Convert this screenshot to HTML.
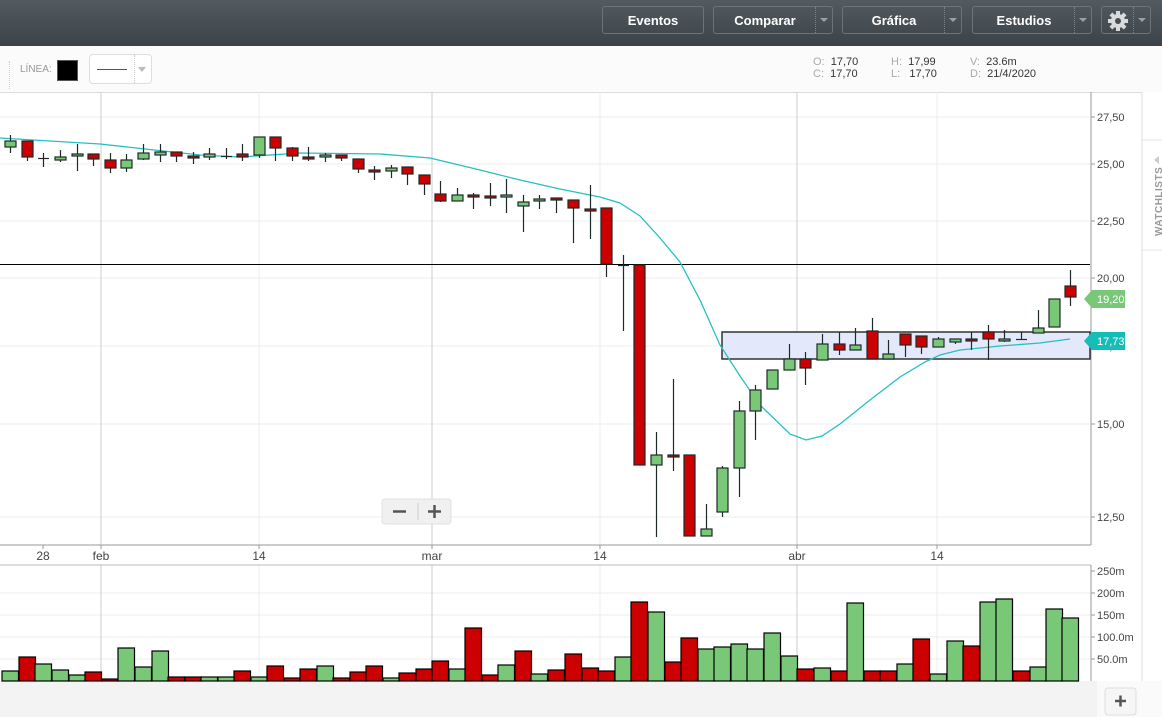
<!DOCTYPE html>
<html><head><meta charset="utf-8"><style>
body{margin:0;width:1162px;height:717px;overflow:hidden;background:#fff;font-family:"Liberation Sans",Arial,sans-serif;position:relative}
.top{position:absolute;left:0;top:0;width:1162px;height:46px;background:linear-gradient(#525b60,#3b4348)}
.btn{position:absolute;top:6px;height:28px;border:1px solid #6b7479;border-radius:3px;color:#fff;font-weight:bold;font-size:13px;line-height:28px;text-align:center;box-sizing:border-box}
.dd{position:absolute;right:0;top:0;width:16px;height:26px;border-left:1px dotted #7a8287}
.dd:after{content:"";position:absolute;left:4px;top:11px;border:4px solid transparent;border-top:4px solid #9aa1a5}
.tb{position:absolute;left:0;top:46px;width:1162px;height:46px;background:#fbfbfb}
.info{position:absolute;font-size:11px;color:#333;line-height:12px}
.info span{color:#aaa}
</style></head><body>
<div class="top">
<div class="btn" style="left:602px;width:102px">Eventos</div>
<div class="btn" style="left:713px;width:120px;padding-right:16px">Comparar<div class="dd"></div></div>
<div class="btn" style="left:842px;width:120px;padding-right:16px">Gráfica<div class="dd"></div></div>
<div class="btn" style="left:972px;width:120px;padding-right:16px">Estudios<div class="dd"></div></div>
<div class="btn" style="left:1101px;width:50px;padding-right:16px"><svg width="22" height="22" viewBox="0 0 22 22" style="margin-top:3px"><g fill="#d8dadb"><circle cx="11" cy="11" r="7"/><rect x="9" y="1" width="4" height="20"/><rect x="1" y="9" width="20" height="4"/><rect x="9" y="1" width="4" height="20" transform="rotate(45 11 11)"/><rect x="9" y="1" width="4" height="20" transform="rotate(-45 11 11)"/></g><circle cx="11" cy="11" r="3" fill="#454d52"/></svg><div class="dd"></div></div>
</div>
<div class="tb">
<div style="position:absolute;left:9px;top:15px;height:28px;border-left:1px dotted #ccc"></div>
<div style="position:absolute;left:20px;top:18px;font-size:10px;color:#999">LÍNEA:</div>
<div style="position:absolute;left:57px;top:14px;width:19px;height:19px;background:#000;border:1px solid #555"></div>
<div style="position:absolute;left:89px;top:8px;width:61px;height:28px;border:1px solid #ddd;border-radius:4px;background:#fff"><div style="position:absolute;left:7px;top:14px;width:30px;border-top:1px solid #555"></div><div style="position:absolute;left:44px;top:0;height:28px;border-left:1px dotted #ccc"></div><div style="position:absolute;left:48px;top:12px;border:4px solid transparent;border-top:5px solid #bbb"></div></div>
<div class="info" style="left:813px;top:10px"><span>O:</span>&nbsp; 17,70<br><span>C:</span>&nbsp; 17,70</div>
<div class="info" style="left:891px;top:10px"><span>H:</span>&nbsp; 17,99<br><span>L:</span>&nbsp;&nbsp; 17,70</div>
<div class="info" style="left:970px;top:10px"><span>V:</span>&nbsp; 23.6m<br><span>D:</span>&nbsp; 21/4/2020</div>
</div>
<svg width="1162" height="625" viewBox="0 92 1162 625" style="position:absolute;left:0;top:92px" font-family="Liberation Sans, Arial, sans-serif" font-size="11">
<rect x="0" y="681" width="1162" height="36" fill="#f3f3f3"/>
<rect x="1097" y="681" width="65" height="36" fill="#fafafa"/>
<rect x="1105" y="688" width="31" height="27" rx="3" fill="#f6f6f6" stroke="#ddd"/>
<path d="M1115 701h11M1120.5 695.5v11" stroke="#555" stroke-width="2.5"/>
<line x1="1142" y1="92" x2="1142" y2="681" stroke="#ddd"/>
<line x1="1142" y1="140" x2="1162" y2="140" stroke="#e4e4e4"/>
<line x1="1142" y1="250" x2="1162" y2="250" stroke="#e4e4e4"/>
<text transform="translate(1162,236) rotate(-90)" font-size="10" fill="#999" font-weight="bold" letter-spacing="0.5">WATCHLISTS</text>
<path d="M1154 160l5-4v8z" fill="#ccc"/>
<line x1="0" y1="92.5" x2="1142" y2="92.5" stroke="#ddd"/>
<g stroke="#ececec"><line x1="0" y1="117" x2="1090" y2="117"/><line x1="0" y1="164" x2="1090" y2="164"/><line x1="0" y1="221" x2="1090" y2="221"/><line x1="0" y1="278" x2="1090" y2="278"/><line x1="0" y1="346" x2="1090" y2="346"/><line x1="0" y1="424" x2="1090" y2="424"/><line x1="0" y1="517" x2="1090" y2="517"/>
<line x1="259" y1="92" x2="259" y2="545"/><line x1="600" y1="92" x2="600" y2="545"/><line x1="937" y1="92" x2="937" y2="545"/>
<line x1="259" y1="565" x2="259" y2="681"/><line x1="600" y1="565" x2="600" y2="681"/><line x1="937" y1="565" x2="937" y2="681"/>
<line x1="0" y1="593" x2="1090" y2="593"/><line x1="0" y1="615" x2="1090" y2="615"/><line x1="0" y1="637" x2="1090" y2="637"/><line x1="0" y1="659" x2="1090" y2="659"/></g>
<g stroke="#ccc"><line x1="101" y1="92" x2="101" y2="545"/><line x1="432" y1="92" x2="432" y2="545"/><line x1="797" y1="92" x2="797" y2="545"/>
<line x1="101" y1="565" x2="101" y2="681"/><line x1="432" y1="565" x2="432" y2="681"/><line x1="797" y1="565" x2="797" y2="681"/></g>
<line x1="1091" y1="92" x2="1091" y2="545" stroke="#999"/>
<line x1="0" y1="545" x2="1091" y2="545" stroke="#999"/>
<line x1="0" y1="565" x2="1091" y2="565" stroke="#bbb"/>
<line x1="1091" y1="565" x2="1091" y2="681" stroke="#999"/>
<g stroke="#999"><line x1="1091" y1="117" x2="1095" y2="117"/><line x1="1091" y1="164" x2="1095" y2="164"/><line x1="1091" y1="221" x2="1095" y2="221"/><line x1="1091" y1="278" x2="1095" y2="278"/><line x1="1091" y1="346" x2="1095" y2="346"/><line x1="1091" y1="424" x2="1095" y2="424"/><line x1="1091" y1="517" x2="1095" y2="517"/>
<line x1="1091" y1="571" x2="1095" y2="571"/><line x1="1091" y1="593" x2="1095" y2="593"/><line x1="1091" y1="615" x2="1095" y2="615"/><line x1="1091" y1="637" x2="1095" y2="637"/><line x1="1091" y1="659" x2="1095" y2="659"/>
<line x1="43" y1="545" x2="43" y2="549"/><line x1="101" y1="545" x2="101" y2="549"/><line x1="259" y1="545" x2="259" y2="549"/><line x1="432" y1="545" x2="432" y2="549"/><line x1="600" y1="545" x2="600" y2="549"/><line x1="797" y1="545" x2="797" y2="549"/><line x1="937" y1="545" x2="937" y2="549"/></g>
<g fill="#444" font-size="11"><text x="1097" y="121">27,50</text><text x="1097" y="168">25,00</text><text x="1097" y="225">22,50</text><text x="1097" y="282">20,00</text><text x="1097" y="350">17,50</text><text x="1097" y="428">15,00</text><text x="1097" y="521">12,50</text>
<text x="1097" y="575">250m</text><text x="1097" y="597">200m</text><text x="1097" y="619">150m</text><text x="1097" y="641">100.0m</text><text x="1097" y="663">50.0m</text></g>
<g fill="#444" font-size="12" text-anchor="middle"><text x="43" y="560">28</text><text x="101" y="560">feb</text><text x="259" y="560">14</text><text x="432" y="560">mar</text><text x="600" y="560">14</text><text x="797" y="560">abr</text><text x="937" y="560">14</text></g>
<rect x="722" y="332" width="368" height="27" fill="#e3e9fb" stroke="#333" stroke-width="1.5"/>
<line x1="0" y1="264.5" x2="1090" y2="264.5" stroke="#000"/>
<polyline fill="none" stroke="#26c0c0" stroke-width="1.3" points="0,138 100,144 200,155 240,157 300,153 380,154 430,158 480,170 520,180 560,189 600,197 620,203 640,216 660,238 680,262 700,300 720,345 740,376 760,405 790,434 806,440 822,436 840,424 870,400 900,377 925,362 940,355 960,350 1000,346 1040,343 1070,339"/>
<g id="c" stroke="#1e2a2a" stroke-width="1.2"></g>
<g id="v" stroke="#000" stroke-width="1.2"></g>
<path d="M1084 299l8-9h33v18h-33z" fill="#78c878"/><text x="1097" y="303" fill="#fff" font-size="11">19,20</text>
<path d="M1084 341l8-9h33v18h-33z" fill="#14bdb6"/><text x="1097" y="345" fill="#fff" font-size="11">17,73</text>
<rect x="382" y="499" width="69" height="25" rx="3" fill="#f0f0f0" stroke="#e0e0e0"/>
<line x1="418" y1="503" x2="418" y2="520" stroke="#ccc"/>
<path d="M393 511.5h13M428 511.5h13M434.5 505v13" stroke="#555" stroke-width="2.5"/>
</svg>
<script>
var C=[[10,147,141,135,153],[27,141,157,141,161],[43,158,158,153,167],[60,160,157,150,162],[77,156,154,144,171],[93,154,159,154,166],[110,160,168,153,173],[126,168,160,154,172],[143,159,153,144,160],[160,155,152,144,162],[176,152,156,152,162],[193,156,157,152,164],[209,157,154,148,160],[226,156,156,148,159],[242,154,157,144,161],[259,155,137,137,158],[275,137,148,137,161],[292,148,156,147,161],[308,157,159,147,161],[325,157,155,153,162],[341,155,158,155,161],[358,159,169,159,173],[374,170,172,166,180],[391,171,168,165,178],[407,167,174,167,185],[424,175,184,175,195],[440,194,201,181,202],[457,201,195,188,201],[473,195,197,193,209],[490,196,198,183,206],[506,197,195,179,213],[523,206,202,195,232],[539,201,199,195,209],[556,198,200,199,213],[573,200,208,200,243],[590,209,210,185,239],[606,208,264,208,277],[623,265,265,255,331],[639,265,465,265,465],[656,465,455,432,537],[673,455,457,379,471],[689,455,536,455,536],[706,536,529,504,536],[722,512,468,466,517],[739,468,411,401,497],[755,411,390,385,440],[772,389,370,370,389],[789,370,359,344,370],[805,359,368,352,385],[822,360,344,334,360],[839,344,350,332,355],[855,350,345,328,350],[872,331,359,318,359],[888,359,354,340,359],[905,334,345,334,357],[921,336,347,336,354],[938,347,339,337,347],[955,342,339,339,344],[971,339,341,332,350],[988,332,339,325,360],[1004,341,339,330,342],[1021,339,339,332,339],[1038,333,328,310,333],[1054,327,299,299,327],[1070,286,297,270,306]];
var V=[[671,1],[657,0],[664,1],[670,1],[675,1],[672,0],[679,0],[648,1],[667,1],[651,1],[677,0],[677,0],[677,1],[677,1],[671,0],[677,1],[666,0],[678,0],[669,0],[666,1],[678,0],[672,0],[666,0],[678,1],[673,0],[669,0],[661,0],[669,1],[628,0],[675,0],[665,1],[651,0],[674,1],[670,0],[654,0],[668,0],[671,0],[657,1],[602,0],[612,1],[662,0],[638,0],[649,1],[647,1],[644,1],[649,1],[633,1],[656,1],[669,0],[668,1],[671,0],[603,1],[671,0],[671,0],[664,1],[639,0],[674,1],[641,1],[646,0],[602,1],[599,1],[671,0],[667,1],[609,1],[618,1]];
var ns="http://www.w3.org/2000/svg",g=document.getElementById("c"),gv=document.getElementById("v");
function el(p,t,a){var e=document.createElementNS(ns,t);for(var k in a)e.setAttribute(k,a[k]);p.appendChild(e);}
C.forEach(function(c){var x=c[0],o=c[1],cl=c[2],h=c[3],l=c[4];var top=Math.min(o,cl),b=Math.max(o,cl);var green=cl<o;
el(g,"line",{x1:x+.5,y1:h,x2:x+.5,y2:l});
if(b-top<1){el(g,"line",{x1:x-5,y1:top+.5,x2:x+6,y2:top+.5});}
else el(g,"rect",{x:x-5,y:top,width:11,height:Math.max(b-top,2),fill:green?"#78c878":"#cc0000"});});
C.forEach(function(c,i){var x=c[0],v=V[i];el(gv,"rect",{x:x-8,y:v[0],width:16.5,height:681-v[0],fill:v[1]?"#78c878":"#cc0000"});});
</script>
</body></html>
